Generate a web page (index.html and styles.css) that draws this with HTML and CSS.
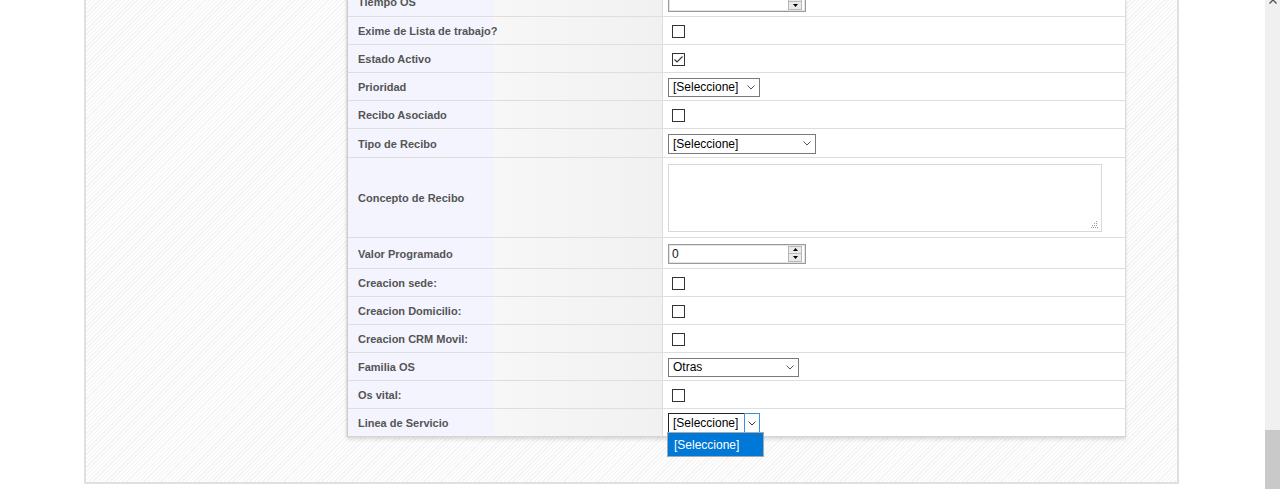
FILE: index.html
```html
<!DOCTYPE html>
<html lang="es">
<head>
<meta charset="utf-8">
<title>Formulario</title>
<link rel="stylesheet" href="styles.css">
</head>
<body>
<div class="page">
  <div class="panel">
    <div class="form">
      <div class="row h31">
        <div class="lbl">Tiempo OS</div>
        <div class="val">
          <div class="num"><span class="numtext"></span>
            <span class="spin"><span class="spin-btn"><svg width="5" height="3" viewBox="0 0 5 3"><path d="M0 3 L2.5 0 L5 3Z" fill="#000"/></svg></span><span class="spin-btn"><svg width="5" height="3" viewBox="0 0 5 3"><path d="M0 0 L2.5 3 L5 0Z" fill="#000"/></svg></span></span>
          </div>
        </div>
      </div>
      <div class="row">
        <div class="lbl">Exime de Lista de trabajo?</div>
        <div class="val"><span class="cb"></span></div>
      </div>
      <div class="row">
        <div class="lbl">Estado Activo</div>
        <div class="val"><span class="cb"><svg width="11" height="11" viewBox="0 0 11 11"><path d="M1.5 5.5 L4 8 L9.5 2.5" fill="none" stroke="#333" stroke-width="1.1"/></svg></span></div>
      </div>
      <div class="row">
        <div class="lbl">Prioridad</div>
        <div class="val"><div class="sel w92"><span class="seltext">[Seleccione]</span><svg class="chev" width="8" height="5" viewBox="0 0 8 5"><path d="M0.5 0.5 L4 4 L7.5 0.5" fill="none" stroke="#555" stroke-width="1"/></svg></div></div>
      </div>
      <div class="row">
        <div class="lbl">Recibo Asociado</div>
        <div class="val"><span class="cb"></span></div>
      </div>
      <div class="row h29">
        <div class="lbl">Tipo de Recibo</div>
        <div class="val"><div class="sel w148 tall"><span class="seltext">[Seleccione]</span><svg class="chev" width="8" height="5" viewBox="0 0 8 5"><path d="M0.5 0.5 L4 4 L7.5 0.5" fill="none" stroke="#555" stroke-width="1"/></svg></div></div>
      </div>
      <div class="row h80">
        <div class="lbl">Concepto de Recibo</div>
        <div class="val">
          <div class="ta"><svg class="grip" width="7" height="7" viewBox="0 0 7 7"><g fill="#9a9a9a"><rect x="5" y="0" width="1" height="1"/><rect x="3" y="2" width="1" height="1"/><rect x="5" y="2" width="1" height="1"/><rect x="1" y="4" width="1" height="1"/><rect x="3" y="4" width="1" height="1"/><rect x="5" y="4" width="1" height="1"/><rect x="0" y="6" width="1" height="1"/><rect x="2" y="6" width="1" height="1"/><rect x="4" y="6" width="1" height="1"/><rect x="6" y="6" width="1" height="1"/></g></svg></div>
        </div>
      </div>
      <div class="row h31">
        <div class="lbl">Valor Programado</div>
        <div class="val">
          <div class="num"><span class="numtext">0</span>
            <span class="spin"><span class="spin-btn"><svg width="5" height="3" viewBox="0 0 5 3"><path d="M0 3 L2.5 0 L5 3Z" fill="#000"/></svg></span><span class="spin-btn"><svg width="5" height="3" viewBox="0 0 5 3"><path d="M0 0 L2.5 3 L5 0Z" fill="#000"/></svg></span></span>
          </div>
        </div>
      </div>
      <div class="row">
        <div class="lbl">Creacion sede:</div>
        <div class="val"><span class="cb"></span></div>
      </div>
      <div class="row">
        <div class="lbl">Creacion Domicilio:</div>
        <div class="val"><span class="cb"></span></div>
      </div>
      <div class="row">
        <div class="lbl">Creacion CRM Movil:</div>
        <div class="val"><span class="cb"></span></div>
      </div>
      <div class="row">
        <div class="lbl">Familia OS</div>
        <div class="val"><div class="sel w131"><span class="seltext">Otras</span><svg class="chev" width="8" height="5" viewBox="0 0 8 5"><path d="M0.5 0.5 L4 4 L7.5 0.5" fill="none" stroke="#555" stroke-width="1"/></svg></div></div>
      </div>
      <div class="row">
        <div class="lbl">Os vital:</div>
        <div class="val"><span class="cb"></span></div>
      </div>
      <div class="row last">
        <div class="lbl">Linea de Servicio</div>
        <div class="val">
          <div class="sel-open">
            <span class="sel-open-text">[Seleccione]</span>
            <span class="sel-open-btn"><svg width="8" height="5" viewBox="0 0 8 5"><path d="M0.5 0.5 L4 4 L7.5 0.5" fill="none" stroke="#333" stroke-width="1"/></svg></span>
            <div class="droplist"><div class="opt">[Seleccione]</div></div>
          </div>
        </div>
      </div>
    </div>
  </div>
</div>
<div class="scrollbar">
  <svg class="sb-up" width="8" height="5" viewBox="0 0 8 5"><path d="M0.5 4.5 L4 1 L7.5 4.5" fill="none" stroke="#555" stroke-width="1.4"/></svg>
  <div class="sb-thumb"></div>
</div>
</body>
</html>
```

FILE: styles.css
```css
* {
  box-sizing: border-box;
}

html, body {
  margin: 0;
  padding: 0;
  height: 489px;
  overflow: hidden;
  background: #ffffff;
}

body {
  font-family: "Liberation Sans", Arial, sans-serif;
}

.page {
  width: 1265px;
}

.panel {
  width: 1095px;
  margin: -60px 0 0 84px;
  padding: 44px 0 45px 0;
  border: 2px solid #e0e0e0;
  background-color: #fcfcfc;
  background-image: repeating-linear-gradient(135deg, #fdfdfd 0, #fdfdfd 2px, #f3f3f3 2px, #f3f3f3 3px);
}

.form {
  margin-left: 261px;
  width: 779px;
  border-left: 1px solid #cccccc;
  box-shadow: -1px 0 2px rgba(0, 0, 0, 0.10), 0 3px 3px rgba(0, 0, 0, 0.10);
}

.row {
  display: flex;
  height: 28px;
  border-bottom: 1px solid #dedede;
}

.row.h29 { height: 29px; }
.row.h31 { height: 31px; }
.row.h80 { height: 80px; }
.row.last { border-bottom-color: #d6d6d6; }

.lbl {
  width: 315px;
  flex: none;
  display: flex;
  align-items: center;
  padding: 1px 0 0 10px;
  border-right: 1px solid #dedede;
  background: linear-gradient(to right, #f3f4fd 0, #f3f4fd 146px, #f7f7f8 146px, #f1f1f1 100%);
  font-size: 11px;
  font-weight: bold;
  color: #555555;
  white-space: nowrap;
}

.val {
  width: 463px;
  flex: none;
  display: flex;
  align-items: center;
  padding: 1px 0 0 5px;
  background: #ffffff;
  border-right: 1px solid #dadada;
}

.cb {
  width: 13px;
  height: 13px;
  margin-left: 4px;
  border: 1px solid #333333;
  background: #ffffff;
  display: flex;
  align-items: center;
  justify-content: center;
}

.cb svg {
  display: block;
}

.sel {
  height: 19px;
  display: flex;
  align-items: center;
  border: 1px solid #7a7a7a;
  background: #ffffff;
  padding: 0 4px 0 4px;
  font-size: 12px;
  color: #000000;
}

.sel.tall { height: 20px; }
.sel.w92 { width: 92px; }
.sel.w148 { width: 148px; }
.sel.w131 { width: 131px; }

.seltext {
  flex: 1;
  white-space: nowrap;
}

.chev {
  display: block;
  flex: none;
}

.num {
  width: 138px;
  height: 20px;
  display: flex;
  align-items: center;
  border: 1px solid #9a9a9a;
  box-shadow: inset 0 0 0 1px #e2e2e2;
  padding: 0 3px 0 3px;
  font-size: 12px;
  color: #141414;
  background: #ffffff;
}

.numtext {
  flex: 1;
}

.spin {
  width: 14px;
  height: 16px;
  display: flex;
  flex-direction: column;
  border: 1px solid #b9b9b9;
  background: #e9e9e9;
}

.spin-btn {
  flex: 1;
  display: flex;
  align-items: center;
  justify-content: center;
}

.spin-btn + .spin-btn {
  border-top: 1px solid #b9b9b9;
}

.spin-btn svg {
  display: block;
}

.ta {
  position: relative;
  width: 434px;
  height: 68px;
  border: 1px solid #d8d8d8;
  background: #ffffff;
}

.grip {
  position: absolute;
  right: 3px;
  bottom: 3px;
  display: block;
}

.sel-open {
  position: relative;
  display: flex;
  height: 20px;
  width: 92px;
  font-size: 12px;
}

.sel-open-text {
  flex: 1;
  display: flex;
  align-items: center;
  padding-left: 4px;
  border: 1px solid #222222;
  border-right: none;
  color: #000000;
  white-space: nowrap;
}

.sel-open-btn {
  width: 16px;
  flex: none;
  display: flex;
  align-items: center;
  justify-content: center;
  border: 1px solid #3d8ee0;
  background: #ffffff;
}

.droplist {
  position: absolute;
  left: -1px;
  top: 19px;
  width: 97px;
  height: 25px;
  border: 1px solid #a8a8a8;
  background: #0078d7;
  z-index: 2;
}

.opt {
  height: 100%;
  display: flex;
  align-items: center;
  padding-left: 6px;
  color: #ffffff;
  font-size: 12px;
}

.scrollbar {
  position: fixed;
  top: 0;
  right: 0;
  width: 15px;
  height: 489px;
  background: #f0f0f0;
}

.sb-up {
  position: absolute;
  left: 4px;
  top: -1px;
  display: block;
}

.sb-thumb {
  position: absolute;
  left: 0;
  right: 0;
  top: 430px;
  bottom: 0;
  background: #c9c9c9;
}
```
